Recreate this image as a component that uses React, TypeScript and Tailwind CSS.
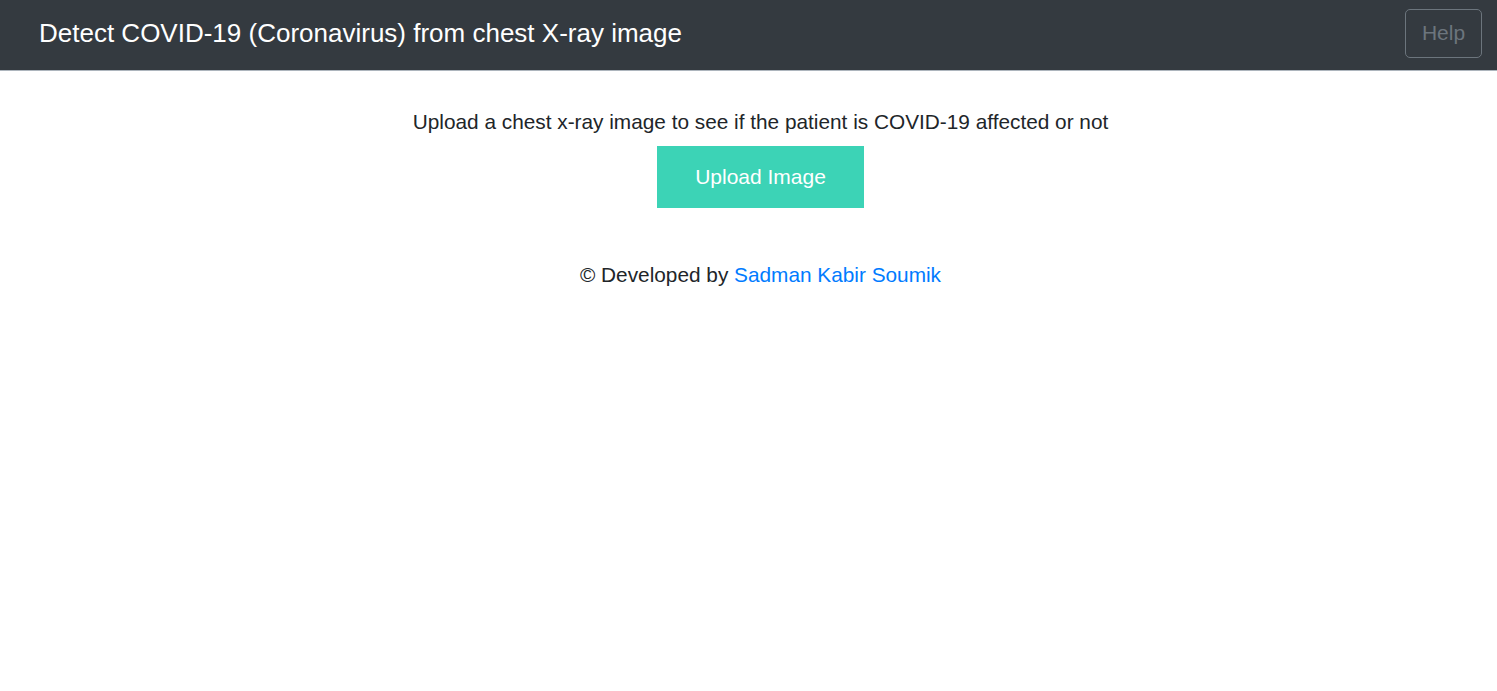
const App = () => {
  return (
    <div className="min-h-screen bg-white font-['Liberation_Sans',Arial,sans-serif] text-[#212529]">
      <nav className="h-[71px] bg-[#343a40] border-b border-[#adb5bd] flex items-center justify-between pl-[39px] pr-[15px] pb-[4px]">
        <h1 className="text-[26px] text-white">Detect COVID-19 (Coronavirus) from chest X-ray image</h1>
        <button className="w-[77px] h-[49px] rounded-[5px] border border-[#6c757d] text-[21px] text-[#6c757d]">
          Help
        </button>
      </nav>
      <main className="flex flex-col items-center pl-[24px] pt-[39px]">
        <p className="text-[20.8px] leading-[24px]">
          Upload a chest x-ray image to see if the patient is COVID-19 affected or not
        </p>
        <button className="mt-[12px] w-[207px] h-[62px] bg-[#3cd3b6] text-white text-[21px]">
          Upload Image
        </button>
        <p className="mt-[55px] text-[20.8px] leading-[24px]">
          © Developed by <a href="#!" className="text-[#007bff]">Sadman Kabir Soumik</a>
        </p>
      </main>
    </div>
  );
};

export default App;
